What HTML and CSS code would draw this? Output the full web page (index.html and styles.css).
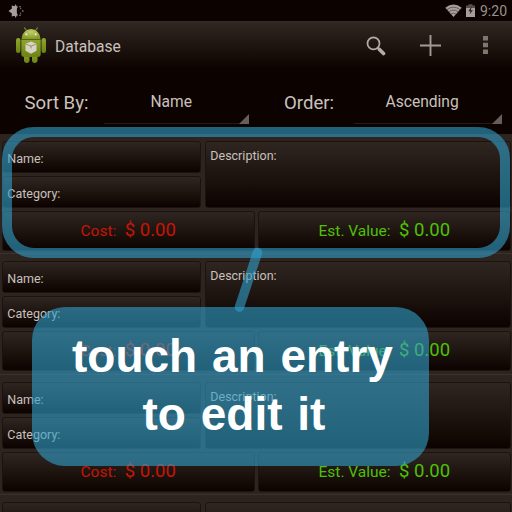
FILE: index.html
```html
<!DOCTYPE html>
<html lang="en">
<head>
<meta charset="utf-8">
<title>Database</title>
<link rel="stylesheet" href="styles.css">
</head>
<body>
<div class="status">
  <svg class="brightness" width="17" height="16" viewBox="0 0 17 16"><path d="M8.700 3.500 7.800 1 6.600 3.200 3.700 2.500 3.900 5.500.5 8 3.900 10.500 3.700 13.500 6.600 12.800 7.800 15 8.700 12.500Z" fill="#a79f9b"/><path d="M10 3.500Q6.800 8 10 12.500H6V3.500Z" fill="#a79f9b"/><path d="M11.300 3.600h1.400M11.300 12.400h1.400M12.200 5.500h1M14 8h1.500M12.200 10.500h1" stroke="#857c78" stroke-width="1.300"/></svg>
  <svg class="wifi" width="17" height="13" viewBox="0 0 17 13"><path d="M.3 3.700Q8.500-2.500 16.700 3.700L8.500 13Z" fill="#a79f9b"/><path d="M2 5.500Q8.500 .8 15 5.500M4 7.700Q8.500 4.500 13 7.700M6 10Q8.500 8.300 11 10" fill="none" stroke="#3b322e" stroke-width=".6"/></svg>
  <svg class="battery" width="9" height="13" viewBox="0 0 9 13"><path d="M0 1.500h2.500V.3h4v1.200H9V5H0Z" fill="#574e4a"/><path d="M0 4h9V13H0Z" fill="#a79f9b"/><path d="M5.600 2.500 2.300 7.200h2.200L3.500 10.500 7 6.200H4.900Z" fill="#2b2420"/></svg>
  <span class="clock">9:20</span>
</div>
<header class="bar">
  <svg class="logo" width="32" height="38" viewBox="0 0 32 38">
    <defs><linearGradient id="g" x1="0" y1="0" x2="0" y2="1"><stop offset="0" stop-color="#8fa62c"/><stop offset="1" stop-color="#6c8314"/></linearGradient>
    <radialGradient id="h" cx=".5" cy=".3" r=".7"><stop offset="0" stop-color="#c0cd6a"/><stop offset="1" stop-color="#849c22"/></radialGradient></defs>
    <path d="m9.500 1.800 2 2.800M22.500 1.800l-2 2.800" stroke="#71832a" stroke-width="1.200" stroke-linecap="round"/>
    <rect x="1" y="12" width="4.500" height="15" rx="2.200" fill="url(#g)"/><rect x="26.500" y="12" width="4.500" height="15" rx="2.200" fill="url(#g)"/>
    <rect x="9" y="26" width="5.500" height="11" rx="2.400" fill="url(#g)"/><rect x="17" y="26" width="5.500" height="11" rx="2.400" fill="url(#g)"/>
    <path d="M6.300 13.500h19.400V28q0 3-3 3H9.300q-3 0-3-3Z" fill="url(#g)"/>
    <path d="M6.500 12.900a9.500 9.900 0 0 1 19 0Z" fill="url(#h)"/>
    <circle cx="11.300" cy="8.300" r="1.100" fill="#eee8dc"/><circle cx="20.700" cy="8.300" r="1.100" fill="#eee8dc"/>
    <path d="m16 15.500 5.500 2.300v7L16 27.800l-5.500-3v-7Z" fill="#d8d2c8"/><path d="m10.800 18 5.200 2.200 5.200-2.200M16 20v2.500" fill="none" stroke="#8a9158" stroke-width=".9"/>
  </svg>
  <h1>Database</h1>
  <svg class="search" width="20" height="20" viewBox="0 0 20 20" fill="none" stroke="#b5aca8"><circle cx="7.500" cy="7.400" r="6" stroke-width="1.700"/><path d="m11.500 11.500 2 2" stroke-width="2"/><path d="m13.500 13.500 4 4" stroke-width="3.600" stroke-linecap="round"/></svg>
  <svg class="plus" width="21" height="21" viewBox="0 0 21 21"><path d="M10.500 0v21M0 10.500h21" stroke="#a39a96" stroke-width="1.900"/></svg>
  <svg class="more" width="5" height="18" viewBox="0 0 5 18"><path d="M0 0h5v4.500H0ZM0 6.700h5v4.500H0ZM0 13.400h5v4.500H0Z" fill="#80756f"/></svg>
</header>
<div class="filters">
  <span class="label sort">Sort By:</span>
  <div class="spinner name">Name<svg width="10" height="10"><path d="M10 0v10H0Z" fill="#675e5a"/></svg></div>
  <span class="label order">Order:</span>
  <div class="spinner asc">Ascending<svg width="10" height="10"><path d="M10 0v10H0Z" fill="#675e5a"/></svg></div>
</div>
<main class="list">
  <section class="record"><div class="top"><div class="pair"><div class="box field">Name:</div><div class="box field">Category:</div></div><div class="box desc">Description:</div></div><div class="money"><div class="box cost"><span>Cost:</span><b>$ 0.00</b></div><div class="box value"><span>Est. Value:</span><b>$ 0.00</b></div></div></section>
  <section class="record"><div class="top"><div class="pair"><div class="box field">Name:</div><div class="box field">Category:</div></div><div class="box desc">Description:</div></div><div class="money"><div class="box cost"><span>Cost:</span><b>$ 0.00</b></div><div class="box value"><span>Est. Value:</span><b>$ 0.00</b></div></div></section>
  <section class="record"><div class="top"><div class="pair"><div class="box field">Name:</div><div class="box field">Category:</div></div><div class="box desc">Description:</div></div><div class="money"><div class="box cost"><span>Cost:</span><b>$ 0.00</b></div><div class="box value"><span>Est. Value:</span><b>$ 0.00</b></div></div></section>
  <section class="record"><div class="top"><div class="pair"><div class="box"></div></div><div class="box desc">Description:</div></div></section>
</main>
<div class="highlight"></div>
<svg class="pointer" width="40" height="76" viewBox="230 242 40 76"><path d="M257.500 252.500 239.500 307" stroke="#30a0cb" stroke-opacity=".6" stroke-width="9.500" stroke-linecap="round"/></svg>
<div class="callout"><span class="line1">touch an entry</span><span class="line2">to edit it</span></div>
</body>
</html>
```

FILE: styles.css
```css
* { box-sizing: border-box; }
body { margin: 0; width: 512px; height: 512px; overflow: hidden; position: relative; background: #0c0300; color: #c9c1bd; font-family: Roboto, sans-serif; }
svg { display: block; flex: none; }
.status { height: 21px; display: flex; align-items: flex-start; }
.brightness { margin: 3px 0 0 8px; }
.wifi { margin: 4px 4px 0 auto; }
.battery { margin: 4px 5px 0 0; }
.clock { width: 32px; font-size: 14px; line-height: 16px; margin-top: 3px; color: #9a918d; }
.bar { height: 48px; display: flex; align-items: flex-start; border-top: 1px solid #352c28; background: linear-gradient(#302722, #0c0300); }
.logo { margin: 4px 0 0 15px; }
.bar h1 { margin: 14px 0 0 8px; width: 311px; font-size: 15.600px; line-height: 22px; font-weight: 400; }
.search { margin-top: 14px; }
.plus { margin: 13px 0 0 34px; }
.more { margin: 14px 0 0 42px; }
.filters { height: 65px; display: flex; align-items: flex-start; white-space: nowrap; }
.label { font-size: 18.600px; line-height: 24px; margin-top: 22px; }
.sort { width: 79.500px; margin-left: 24.500px; }
.order { width: 70px; margin-left: 35px; }
.spinner { position: relative; height: 54.500px; padding-top: 22px; border-bottom: 1px solid #241a17; font-size: 15.600px; line-height: 23px; }
.spinner svg { position: absolute; right: 0; bottom: -1px; }
.name { width: 145px; padding-left: 46.500px; }
.asc { width: 148px; padding-left: 31.500px; }
.list { height: 378px; overflow: hidden; background: #2d2420; }
.record { height: 120.300px; padding: 7px 1px 0 2px; border-bottom: 1px solid #3b322e; display: flex; flex-direction: column; gap: 3px; }
.top { height: 67px; display: grid; grid-template-columns: 199px 1fr; gap: 4px; }
.pair { display: grid; grid-template-rows: 32px 32px; gap: 3px; }
.box { border: 1px solid #1c120f; border-radius: 3px; background: linear-gradient(#2f2621, #0c0300); }
.field, .desc { font-size: 12.500px; padding-left: 4.300px; }
.field { line-height: 34px; }
.desc { line-height: 27px; }
.money { height: 36.500px; display: grid; grid-template-columns: 253px 1fr; gap: 3px; }
.cost, .value { display: flex; align-items: baseline; line-height: 37px; font-size: 15.500px; }
.money b { font-weight: 400; font-size: 18.500px; }
.cost { color: #c81404; padding-left: 77.500px; }
.value { color: #50c004; padding-left: 59.500px; }
.money span { margin-right: 8.500px; }
.highlight { position: absolute; left: 2px; top: 127px; width: 508px; height: 131px; border: 10px solid rgba(48,160,203,.6); border-radius: 32px; }
.pointer { position: absolute; left: 230px; top: 242px; }
.callout { position: absolute; left: 32px; top: 307px; width: 397px; height: 159px; border-radius: 33px; background: rgba(48,160,203,.6); color: #fff; font: bold 46px/58px "Liberation Sans", sans-serif; word-spacing: 2px; padding: 20px 0 0 40px; white-space: nowrap; }
.callout span { display: block; }
.callout .line2 { padding-left: 70.500px; }
```
